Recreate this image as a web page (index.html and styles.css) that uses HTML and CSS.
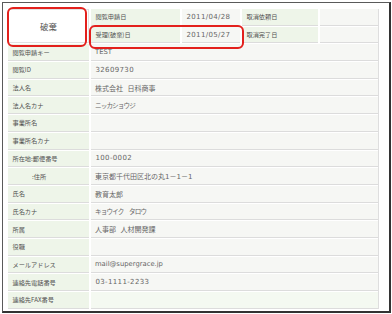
FILE: index.html
```html
<!DOCTYPE html>
<html lang="ja">
<head>
<meta charset="utf-8">
<link rel="stylesheet" href="styles.css">
</head>
<body>
<div class="frame">
  <div class="sheet">
    <div class="cell action">破棄</div>
    <div class="cell label">閲覧申請日</div>
    <div class="cell value num">2011/04/28</div>
    <div class="cell label">取消依頼日</div>
    <div class="cell value"></div>
    <div class="cell label">受理(破棄)日</div>
    <div class="cell value num">2011/05/27</div>
    <div class="cell label">取消完了日</div>
    <div class="cell value"></div>

    <div class="cell label">閲覧申請キー</div>
    <div class="cell value wide latin">TEST</div>
    <div class="cell label">閲覧ID</div>
    <div class="cell value wide num">32609730</div>
    <div class="cell label">法人名</div>
    <div class="cell value wide">株式会社&nbsp;&nbsp;日科商事</div>
    <div class="cell label">法人名カナ</div>
    <div class="cell value wide kana">ニッカショウジ</div>
    <div class="cell label">事業所名</div>
    <div class="cell value wide"></div>
    <div class="cell label">事業所名カナ</div>
    <div class="cell value wide"></div>
    <div class="cell label">所在地:郵便番号</div>
    <div class="cell value wide num">100-0002</div>
    <div class="cell label indent">:住所</div>
    <div class="cell value wide">東京都千代田区北の丸1－1－1</div>
    <div class="cell label">氏名</div>
    <div class="cell value wide">教育太郎</div>
    <div class="cell label">氏名カナ</div>
    <div class="cell value wide kana">キョウイク　タロウ</div>
    <div class="cell label">所属</div>
    <div class="cell value wide">人事部&nbsp;&nbsp;人材開発課</div>
    <div class="cell label">役職</div>
    <div class="cell value wide"></div>
    <div class="cell label">メールアドレス</div>
    <div class="cell value wide latin">mail@supergrace.jp</div>
    <div class="cell label">連絡先電話番号</div>
    <div class="cell value wide num">03-1111-2233</div>
    <div class="cell label">連絡先FAX番号</div>
    <div class="cell value wide hover"></div>
  </div>
  <div class="mark mark-action"></div>
  <div class="mark mark-date"></div>
</div>
</body>
</html>
```

FILE: styles.css
```css
html, body {
  margin: 0;
  padding: 0;
  background: #ffffff;
}

.frame {
  position: relative;
  box-sizing: border-box;
  margin: 2px 1px 1px 2px;
  height: 311px;
  border-left: 1px solid #5a5a5a;
  border-top: 1px solid #5a5a5a;
  border-right: 2px solid #333333;
  border-bottom: 2px solid #333333;
  padding: 6px 0 0 5px;
  background: #ffffff;
}

.sheet {
  display: grid;
  grid-template-columns: 81px 89px 58px 76px 58px;
  grid-auto-rows: 16.7px;
  column-gap: 2px;
  row-gap: 1px;
  width: 370px;
  border-right: 1px solid #dedede;
  font-family: "Noto Sans CJK JP", sans-serif;
}

.cell {
  box-sizing: border-box;
  display: flex;
  align-items: center;
  border-bottom: 1px solid #dcdcdc;
  padding-left: 4px;
  white-space: nowrap;
  overflow: hidden;
}

.label {
  background: #eef5e9;
  color: #505050;
  font-size: 6.2px;
  padding-left: 4.5px;
}

.label.indent {
  padding-left: 24px;
}

.value {
  background: #f6f7f4;
  color: #666666;
  font-size: 7px;
  font-family: "DejaVu Sans", "Noto Sans CJK JP", sans-serif;
}

.value.wide {
  grid-column: 2 / -1;
}

.value.num {
  letter-spacing: 0.35px;
  padding-left: 4.5px;
}

.value.latin {
  font-size: 6.8px;
}

.value.kana {
  font-family: "Noto Sans CJK JP", sans-serif;
  font-size: 6.6px;
  letter-spacing: -0.9px;
}

.value.hover {
  background: #f4f9f1;
}

.action {
  grid-row: span 2;
  justify-content: center;
  padding-left: 0;
  background: #ffffff;
  border: 1px solid #e2e2e2;
  color: #555555;
  font-size: 8.5px;
}

.mark {
  position: absolute;
  box-sizing: border-box;
  border: 2px solid #e3201c;
  border-radius: 6px;
}

.mark-action {
  left: 4px;
  top: 4px;
  width: 80px;
  height: 40px;
}

.mark-date {
  left: 86px;
  top: 22px;
  width: 155px;
  height: 24px;
}
```
